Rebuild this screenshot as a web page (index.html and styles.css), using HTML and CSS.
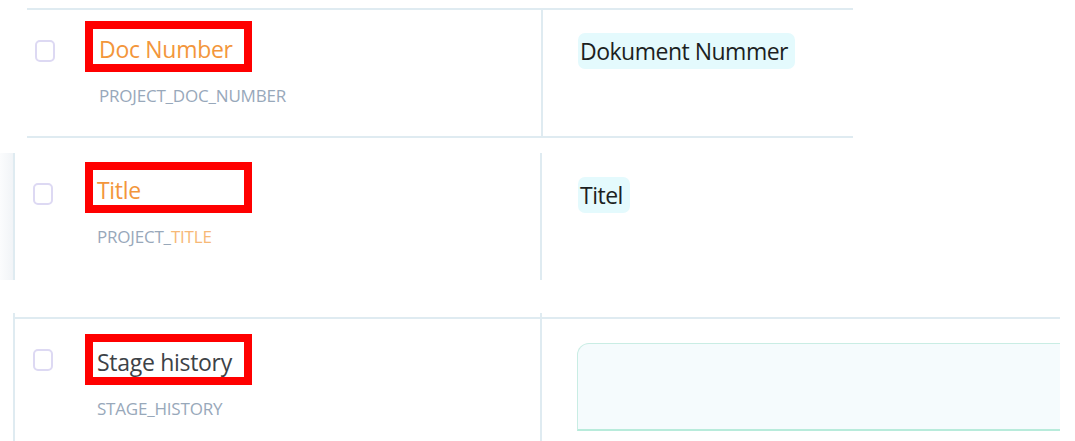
FILE: index.html
```html
<!DOCTYPE html>
<html lang="en">
<head>
<meta charset="utf-8">
<title>Field mapping</title>
<link rel="stylesheet" href="styles.css">
</head>
<body>
<div class="shot shot-1">
  <div class="row">
    <div class="cell cell-name">
      <span class="checkbox"></span>
      <div class="field field-wide">
        <div class="field-name accent">Doc Number</div>
        <div class="field-key">PROJECT_DOC_NUMBER</div>
      </div>
    </div>
    <div class="cell cell-value">
      <span class="chip">Dokument Nummer</span>
    </div>
  </div>
</div>

<div class="shot shot-2">
  <div class="strip"></div>
  <div class="row">
    <div class="cell cell-name">
      <span class="checkbox"></span>
      <div class="field">
        <div class="field-name accent">Title</div>
        <div class="field-key">PROJECT_<span class="key-accent">TITLE</span></div>
      </div>
    </div>
    <div class="cell cell-value">
      <span class="chip">Titel</span>
    </div>
  </div>
</div>

<div class="shot shot-3">
  <div class="stub"><div></div><div class="stub-value"></div></div>
  <div class="row">
    <div class="cell cell-name">
      <span class="checkbox"></span>
      <div class="field">
        <div class="field-name">Stage history</div>
        <div class="field-key">STAGE_HISTORY</div>
      </div>
    </div>
    <div class="cell cell-value">
      <div class="input"></div>
    </div>
  </div>
</div>
</body>
</html>
```

FILE: styles.css
```css
:root {
  --line: #dfebf1;
}

* { box-sizing: border-box; }

html, body {
  margin: 0;
  padding: 0;
  background: #ffffff;
}

body {
  width: 1075px;
  height: 441px;
  overflow: hidden;
  font-family: "Open Sans", "Noto Sans", sans-serif;
}

.row {
  display: grid;
}

.cell-name {
  display: flex;
  align-items: flex-start;
}

.cell-value {
  border-left: 2px solid var(--line);
}

.checkbox {
  flex: none;
  width: 20px;
  height: 22px;
  border: 2px solid #ddd9f3;
  border-radius: 5px;
  background: #ffffff;
}

.field {
  --inset: 4px;
}

.field-wide {
  --inset: 6px;
}

.field-name {
  width: 151px;
  height: 35px;
  padding-left: var(--inset);
  outline: 8px solid #ff0000;
  font-size: 23px;
  line-height: 41px;
  letter-spacing: -0.3px;
  color: #3d4247;
  white-space: nowrap;
}

.field-name.accent {
  color: #f3963b;
}

.field-key {
  margin-top: 22px;
  padding-left: var(--inset);
  font-size: 17px;
  line-height: 20px;
  letter-spacing: -0.2px;
  color: #98a8ba;
  white-space: nowrap;
}

.key-accent {
  color: #f7b877;
}

.chip {
  display: inline-block;
  height: 36px;
  padding: 0 7px 0 2px;
  border-radius: 7px;
  background: #e4fafd;
  color: #1c1f22;
  font-size: 23px;
  line-height: 36px;
  letter-spacing: -0.5px;
  white-space: nowrap;
}

/* first crop */
.shot-1 {
  margin: 8px 0 0 27px;
  width: 826px;
  border-top: 2px solid var(--line);
  border-bottom: 2px solid var(--line);
}

.shot-1 .row {
  grid-template-columns: 514px 1fr;
  height: 126px;
}

.shot-1 .cell-name {
  padding: 19px 0 0 8px;
  gap: 38px;
}

.shot-1 .checkbox { margin-top: 11px; }

.shot-1 .cell-value {
  padding: 23px 0 0 35px;
}

/* second crop */
.shot-2 {
  margin-top: 15px;
  display: flex;
  height: 127px;
}

.strip {
  flex: none;
  width: 13px;
  background: linear-gradient(to right, #fbfcfd, #f1f4f7);
}

.shot-2 .row {
  flex: 1;
  border-left: 2px solid var(--line);
  grid-template-columns: 525px 1fr;
}

.shot-2 .cell-name {
  padding: 17px 0 0 18px;
  gap: 40px;
}

.shot-2 .checkbox { margin-top: 13px; }

.shot-2 .cell-value {
  padding: 24px 0 0 36px;
}

/* third crop */
.shot-3 {
  margin: 33px 0 0 13px;
  width: 1047px;
  height: 128px;
  border-left: 2px solid var(--line);
  overflow: hidden;
}

.stub {
  display: grid;
  grid-template-columns: 525px 1fr;
  height: 4px;
}

.stub-value {
  border-left: 2px solid var(--line);
}

.shot-3 .row {
  grid-template-columns: 525px 1fr;
  border-top: 2px solid var(--line);
  height: 124px;
}

.shot-3 .cell-name {
  padding: 23px 0 0 18px;
  gap: 40px;
}

.shot-3 .checkbox { margin-top: 7px; }

.shot-3 .cell-value {
  padding: 24px 0 0 35px;
  overflow: hidden;
}

.input {
  width: 620px;
  height: 88px;
  border: 1.5px solid #c9ede4;
  border-bottom: 2.5px solid #b8ebdb;
  border-radius: 12px 12px 0 0;
  border-bottom-left-radius: 0;
  background: #f5fbfd;
}
```
